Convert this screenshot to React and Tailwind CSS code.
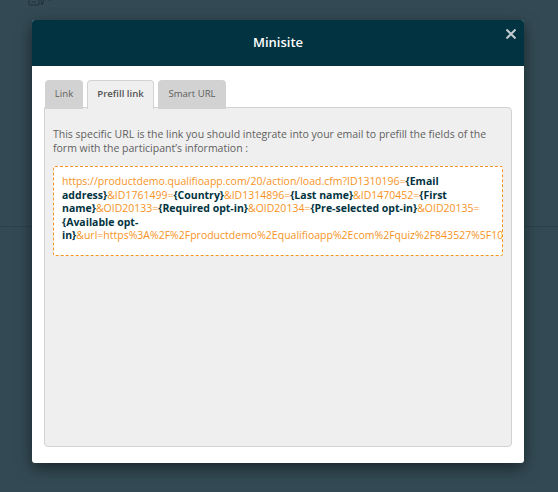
const font = { fontFamily: '"Open Sans", sans-serif' };

function Tab({ label, active, width }) {
  if (active) {
    return (
      <div className={`flex h-[29px] ${width} items-center justify-center rounded-t border border-b-0 border-[#d2d2d2] bg-[#efefef] pb-[1px] text-[9.6px] font-semibold text-[#555]`}>
        {label}
      </div>
    );
  }
  return (
    <div className={`flex h-[29px] ${width} items-center justify-center rounded-t bg-[#d2d2d2] pb-[1px] text-[9.6px] text-[#5f5f5f]`}>
      {label}
    </div>
  );
}

function Field({ children }) {
  return <b className="text-[#023340]">{children}</b>;
}

export default function App() {
  return (
    <div style={font} className="relative h-[492px] w-[558px] overflow-hidden bg-[#334a54]">
      <div className="h-[227px] border-b border-[#2c414b] pl-[28px]">
        <svg width="24" height="6" viewBox="0 0 24 6" fill="none" stroke="#1f3039">
          <path d="M1 0v5h10V0M4 2h4M13 0l1 5 2-5M22 0v1" />
        </svg>
      </div>
      <div className="absolute left-[32px] top-[20px] flex h-[443px] w-[492px] flex-col overflow-hidden rounded-[3px] bg-white shadow-[0_5px_15px_rgba(0,0,0,0.5)]">
        <div className="relative flex h-[46px] shrink-0 items-center justify-center bg-[#023340] text-[13px] font-semibold text-white">
          Minisite
          <svg className="absolute right-[8px] top-[9px]" width="10" height="10" viewBox="0 0 10 10" stroke="#c3ccd0" strokeWidth="2">
            <path d="M0.5 0.5l9 9M9.5 0.5l-9 9" />
          </svg>
        </div>
        <div className="flex flex-1 flex-col px-[12px] pb-[16px] pt-[14px]">
          <div className="z-10 -mb-[2px] flex gap-[4px] pl-px">
            <Tab label="Link" width="w-[38px]" />
            <Tab label="Prefill link" width="w-[67px]" active />
            <Tab label="Smart URL" width="w-[68px]" />
          </div>
          <div className="flex-1 rounded-b rounded-tr border border-[#d2d2d2] bg-[#efefef] px-[8px] pt-[19px]">
            <p className="text-[10.5px] leading-[14px] text-[#5f5f5f]">
              This specific URL is the link you should integrate into your email to prefill the fields of the form with the participant’s information :
            </p>
            <div className="mt-[11px] h-[90px] overflow-hidden rounded-[2px] border border-dashed border-[#f7931e] bg-white px-[8px] pt-[8px] text-[10.5px] leading-[13.6px] text-[#f7931e]">
              https://productdemo.qualifioapp.com/20/action/load.cfm?ID1310196=<Field>{"{Email address}"}</Field>&ID1761499=<Field>{"{Country}"}</Field>&ID1314896=<Field>{"{Last name}"}</Field>&ID1470452=<Field>{"{First name}"}</Field>&OID20133=<Field>{"{Required opt-in}"}</Field>&OID20134=<Field>{"{Pre-selected opt-in}"}</Field>&OID20135=<Field>{"{Available opt-in}"}</Field>&url=https%3A%2F%2Fproductdemo%2Equalifioapp%2Ecom%2Fquiz%2F843527%5F10
            </div>
          </div>
        </div>
      </div>
    </div>
  );
}
